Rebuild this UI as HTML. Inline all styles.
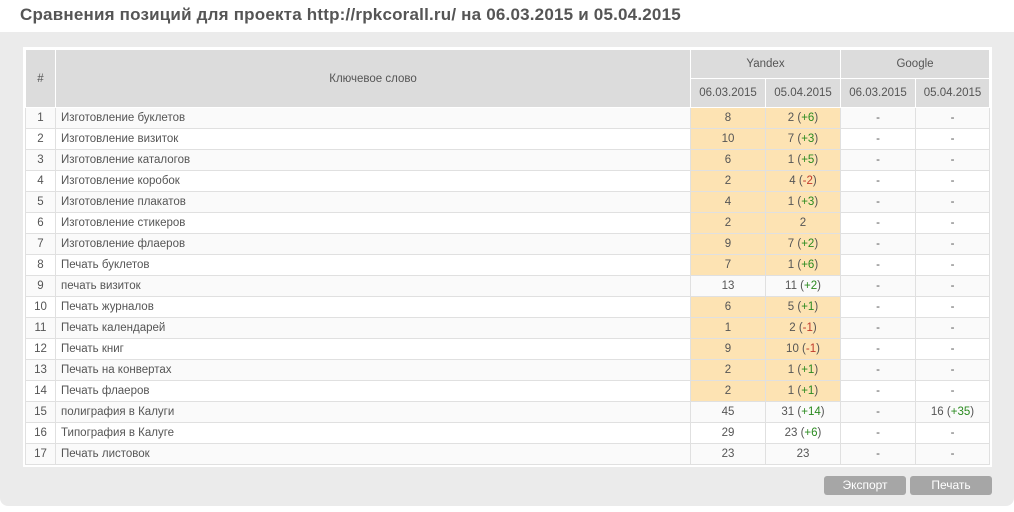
<!DOCTYPE html>
<html><head><meta charset="utf-8"><style>
body{margin:0;width:1014px;height:512px;background:#fff;font-family:"Liberation Sans","DejaVu Sans",sans-serif;overflow:hidden;position:relative}
h1{position:absolute;left:20px;top:5px;margin:0;font:bold 17px "Liberation Sans","DejaVu Sans",sans-serif;color:#555;letter-spacing:0.2px}
.panel{position:absolute;left:0;top:32px;width:1014px;height:474px;background:#ebebeb;border-radius:0 0 8px 8px}
.wrap{position:absolute;left:23px;top:47px;width:965px;height:416px;background:#fff;border:1px solid #fff;padding:1px}
table{border-collapse:collapse;width:964px;table-layout:fixed}
td,th{border:1px solid #e0e0e0;font-size:11.5px;color:#555;font-weight:normal;text-align:center;padding:0;height:20px;white-space:nowrap;overflow:hidden}
th{background:#dcdcdc;border-color:#fff;height:28px}
td.k{text-align:left;padding-left:5px}
tr:nth-child(odd) td{background:#fafafa}
tr td.y{background:#fde3b3 !important}
.g{color:#2a8a1f}.r{color:#c0392b}
.btn{position:absolute;top:476px;height:19px;width:82px;background:#a6a6a6;color:#fff;font-size:12px;text-align:center;line-height:19px;border-radius:3px}
</style></head><body>
<h1>Сравнения позиций для проекта http://rpkcorall.ru/ на 06.03.2015 и 05.04.2015</h1>
<div class="panel"></div>
<div class="wrap"><table>
<colgroup><col style="width:30px"><col style="width:635px"><col style="width:75px"><col style="width:75px"><col style="width:75px"><col style="width:74px"></colgroup>
<thead>
<tr><th rowspan="2">#</th><th rowspan="2">Ключевое слово</th><th colspan="2">Yandex</th><th colspan="2">Google</th></tr>
<tr><th>06.03.2015</th><th>05.04.2015</th><th>06.03.2015</th><th>05.04.2015</th></tr>
</thead><tbody>
<tr><td>1</td><td class="k">Изготовление буклетов</td><td class="y">8</td><td class="y">2 (<span class="g">+6</span>)</td><td>-</td><td>-</td></tr>
<tr><td>2</td><td class="k">Изготовление визиток</td><td class="y">10</td><td class="y">7 (<span class="g">+3</span>)</td><td>-</td><td>-</td></tr>
<tr><td>3</td><td class="k">Изготовление каталогов</td><td class="y">6</td><td class="y">1 (<span class="g">+5</span>)</td><td>-</td><td>-</td></tr>
<tr><td>4</td><td class="k">Изготовление коробок</td><td class="y">2</td><td class="y">4 (<span class="r">-2</span>)</td><td>-</td><td>-</td></tr>
<tr><td>5</td><td class="k">Изготовление плакатов</td><td class="y">4</td><td class="y">1 (<span class="g">+3</span>)</td><td>-</td><td>-</td></tr>
<tr><td>6</td><td class="k">Изготовление стикеров</td><td class="y">2</td><td class="y">2</td><td>-</td><td>-</td></tr>
<tr><td>7</td><td class="k">Изготовление флаеров</td><td class="y">9</td><td class="y">7 (<span class="g">+2</span>)</td><td>-</td><td>-</td></tr>
<tr><td>8</td><td class="k">Печать буклетов</td><td class="y">7</td><td class="y">1 (<span class="g">+6</span>)</td><td>-</td><td>-</td></tr>
<tr><td>9</td><td class="k">печать визиток</td><td>13</td><td>11 (<span class="g">+2</span>)</td><td>-</td><td>-</td></tr>
<tr><td>10</td><td class="k">Печать журналов</td><td class="y">6</td><td class="y">5 (<span class="g">+1</span>)</td><td>-</td><td>-</td></tr>
<tr><td>11</td><td class="k">Печать календарей</td><td class="y">1</td><td class="y">2 (<span class="r">-1</span>)</td><td>-</td><td>-</td></tr>
<tr><td>12</td><td class="k">Печать книг</td><td class="y">9</td><td class="y">10 (<span class="r">-1</span>)</td><td>-</td><td>-</td></tr>
<tr><td>13</td><td class="k">Печать на конвертах</td><td class="y">2</td><td class="y">1 (<span class="g">+1</span>)</td><td>-</td><td>-</td></tr>
<tr><td>14</td><td class="k">Печать флаеров</td><td class="y">2</td><td class="y">1 (<span class="g">+1</span>)</td><td>-</td><td>-</td></tr>
<tr><td>15</td><td class="k">полиграфия в Калуги</td><td>45</td><td>31 (<span class="g">+14</span>)</td><td>-</td><td>16 (<span class="g">+35</span>)</td></tr>
<tr><td>16</td><td class="k">Типография в Калуге</td><td>29</td><td>23 (<span class="g">+6</span>)</td><td>-</td><td>-</td></tr>
<tr><td>17</td><td class="k">Печать листовок</td><td>23</td><td>23</td><td>-</td><td>-</td></tr>
</tbody></table></div>
<div class="btn" style="left:824px">Экспорт</div>
<div class="btn" style="left:910px">Печать</div>
</body></html>
